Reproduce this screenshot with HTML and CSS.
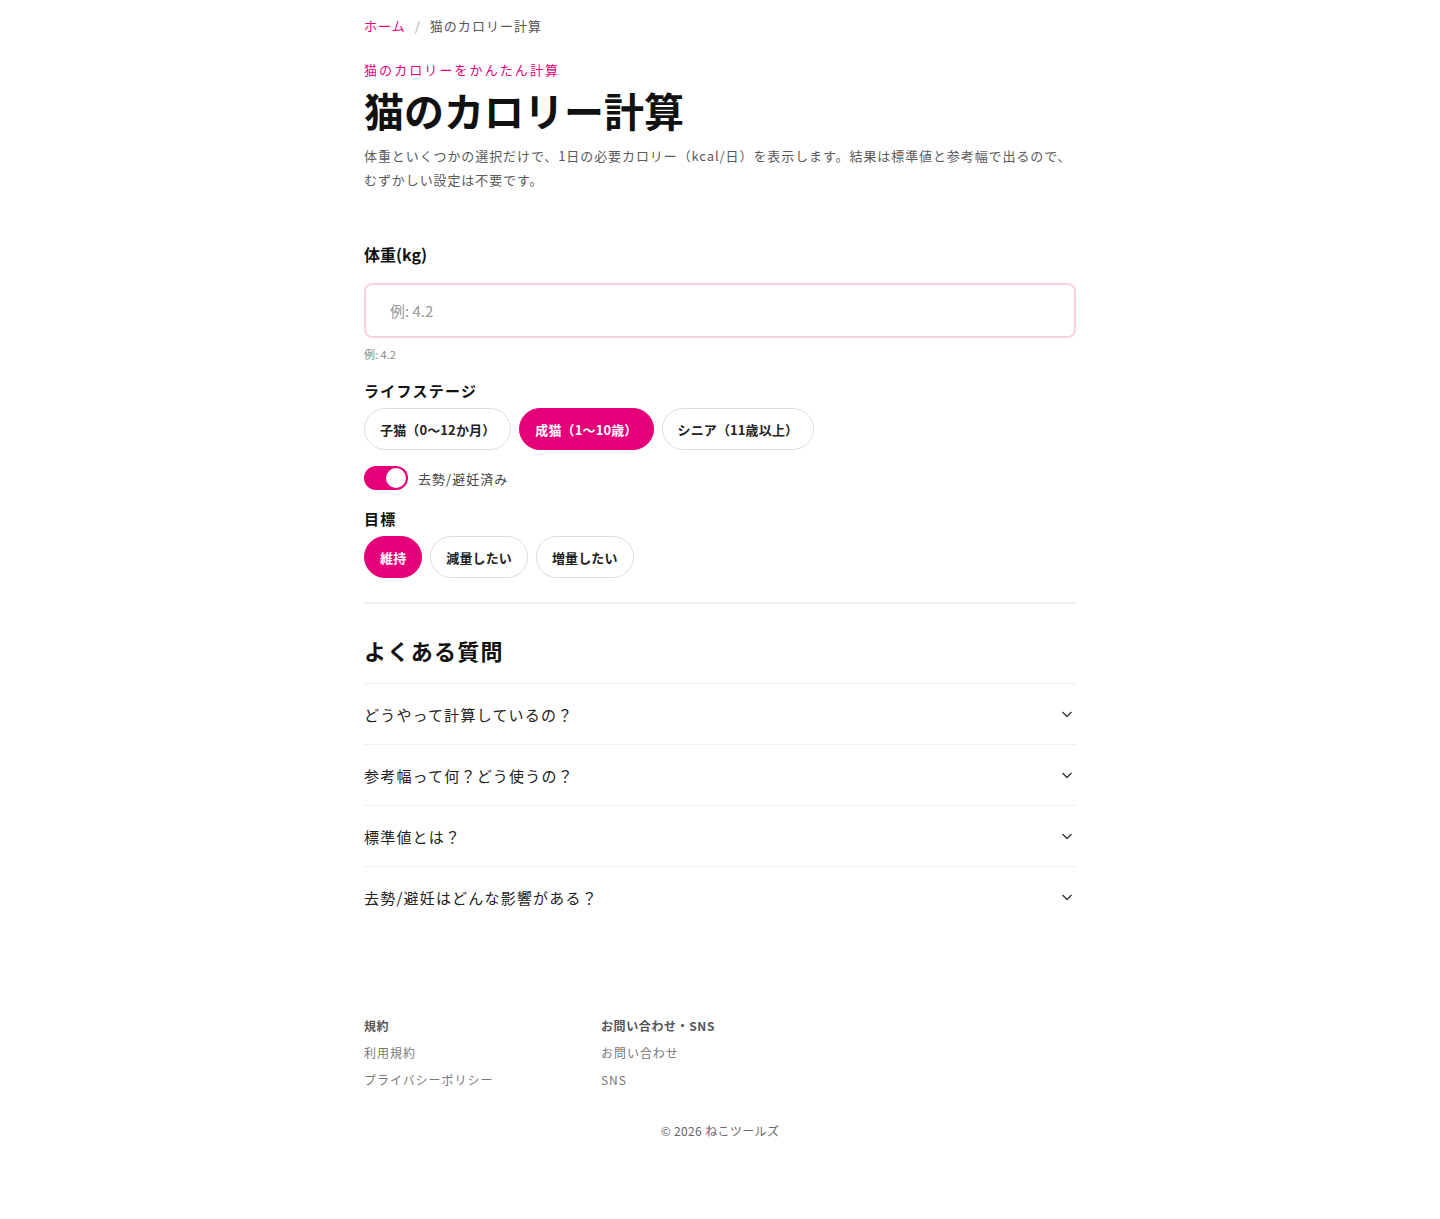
FILE: index.html
```html
<!DOCTYPE html>
<html lang="ja">
<head>
    <meta charset="UTF-8">
    <meta name="viewport" content="width=device-width, initial-scale=1.0">
    <title>猫のカロリー計算</title>
    <link rel="stylesheet" href="styles.css">
</head>
<body>

    <div class="page">
        <nav class="breadcrumb">
            <a href="#">ホーム</a>
            <span class="sep">/</span>
            <span class="current">猫のカロリー計算</span>
        </nav>

        <header class="hero">
            <p class="eyebrow">猫のカロリーをかんたん計算</p>
            <h1>猫のカロリー計算</h1>
            <p class="lead">体重といくつかの選択だけで、1日の必要カロリー（kcal/日）を表示します。結果は標準値と参考幅で出るので、むずかしい設定は不要です。</p>
        </header>

        <section class="form">
            <label class="field-label" for="weight">体重(kg)</label>
            <input id="weight" class="text-input" type="text" placeholder="例: 4.2">
            <p class="hint">例: 4.2</p>

            <h3 class="group-label">ライフステージ</h3>
            <div class="pills">
                <button class="pill">子猫（0〜12か月）</button>
                <button class="pill active">成猫（1〜10歳）</button>
                <button class="pill">シニア（11歳以上）</button>
            </div>

            <label class="switch-row">
                <span class="switch on"><span class="knob"></span></span>
                <span class="switch-text">去勢/避妊済み</span>
            </label>

            <h3 class="group-label">目標</h3>
            <div class="pills">
                <button class="pill active">維持</button>
                <button class="pill">減量したい</button>
                <button class="pill">増量したい</button>
            </div>
        </section>

        <section class="faq">
            <h2>よくある質問</h2>
            <div class="faq-item">
                <span>どうやって計算しているの？</span>
                <svg class="chevron" viewBox="0 0 12 12" width="12" height="12"><path d="M1.5 4 L6 8.5 L10.5 4" fill="none" stroke="#333" stroke-width="1.3"/></svg>
            </div>
            <div class="faq-item">
                <span>参考幅って何？どう使うの？</span>
                <svg class="chevron" viewBox="0 0 12 12" width="12" height="12"><path d="M1.5 4 L6 8.5 L10.5 4" fill="none" stroke="#333" stroke-width="1.3"/></svg>
            </div>
            <div class="faq-item">
                <span>標準値とは？</span>
                <svg class="chevron" viewBox="0 0 12 12" width="12" height="12"><path d="M1.5 4 L6 8.5 L10.5 4" fill="none" stroke="#333" stroke-width="1.3"/></svg>
            </div>
            <div class="faq-item">
                <span>去勢/避妊はどんな影響がある？</span>
                <svg class="chevron" viewBox="0 0 12 12" width="12" height="12"><path d="M1.5 4 L6 8.5 L10.5 4" fill="none" stroke="#333" stroke-width="1.3"/></svg>
            </div>
        </section>

        <footer class="footer">
            <div class="footer-cols">
                <div class="footer-col">
                    <h4>規約</h4>
                    <a href="#">利用規約</a>
                    <a href="#">プライバシーポリシー</a>
                </div>
                <div class="footer-col">
                    <h4>お問い合わせ・SNS</h4>
                    <a href="#">お問い合わせ</a>
                    <a href="#">SNS</a>
                </div>
            </div>
            <p class="copy">© 2026 ねこツールズ</p>
        </footer>
    </div>

</body>
</html>
```

FILE: styles.css
```css
body {
    margin: 0;
    background: #fff;
    color: #111;
    font-family: "Noto Sans CJK JP", "Noto Sans", sans-serif;
}
.page {
    max-width: 712px;
    margin: 0 auto;
    padding-top: 16px;
}
.breadcrumb {
    font-size: 13px;
    line-height: 20px;
    letter-spacing: 0.08em;
    color: #555;
}
.breadcrumb a {
    color: #e5007a;
    text-decoration: none;
}
.breadcrumb .sep {
    color: #aaa;
    margin: 0 5px;
}
.hero {
    margin-top: 24px;
}
.eyebrow {
    margin: 0;
    font-size: 13px;
    line-height: 20px;
    letter-spacing: 0.16em;
    color: #e5007a;
}
.hero h1 {
    margin: 6px 0 0;
    font-size: 40px;
    line-height: 48px;
    font-weight: 700;
    color: #111;
}
.lead {
    margin: 10px 0 0;
    font-size: 13px;
    line-height: 24px;
    letter-spacing: 0.07em;
    color: #5a5a5a;
}
.form {
    margin-top: 50px;
    padding-bottom: 24px;
    border-bottom: 2px solid #f1f1f3;
}
.field-label {
    display: block;
    font-size: 16px;
    line-height: 24px;
    font-weight: 700;
}
.text-input {
    display: block;
    box-sizing: border-box;
    width: 100%;
    height: 55px;
    margin-top: 17px;
    padding: 0 24px;
    border: 2px solid #fbcfe6;
    border-radius: 8px;
    font-family: inherit;
    font-size: 15px;
    color: #111;
    outline: none;
}
.text-input::placeholder {
    color: #999;
}
.hint {
    margin: 8px 0 0;
    font-size: 11px;
    line-height: 16px;
    color: #888;
}
.group-label {
    margin: 18px 0 0;
    font-size: 15px;
    line-height: 22px;
    font-weight: 700;
    letter-spacing: 0.08em;
}
.pills {
    display: flex;
    gap: 8px;
    margin-top: 6px;
}
.pill {
    height: 42px;
    padding: 0 15px;
    border: 1px solid #dcdce2;
    border-radius: 999px;
    background: #fff;
    font-family: inherit;
    font-size: 13px;
    font-weight: 700;
    letter-spacing: 0.01em;
    color: #222;
    cursor: pointer;
}
.pill.active {
    background: #e5007a;
    border-color: #e5007a;
    color: #fff;
}
.switch-row {
    display: flex;
    align-items: center;
    gap: 10px;
    margin-top: 16px;
}
.switch {
    display: flex;
    align-items: center;
    box-sizing: border-box;
    width: 44px;
    height: 24px;
    padding: 2px;
    border-radius: 12px;
    background: #ccc;
}
.switch.on {
    background: #e5007a;
    justify-content: flex-end;
}
.knob {
    width: 20px;
    height: 20px;
    border-radius: 50%;
    background: #fff;
}
.switch-text {
    font-size: 13px;
    color: #444;
    letter-spacing: 0.08em;
}
.faq h2 {
    margin: 30px 0 0;
    font-size: 22px;
    line-height: 32px;
    font-weight: 700;
    letter-spacing: 0.06em;
    padding-bottom: 17px;
}
.faq-item {
    display: flex;
    align-items: center;
    justify-content: space-between;
    height: 60px;
    border-top: 1px solid #f0f0f2;
    font-size: 15px;
    letter-spacing: 0.08em;
    color: #222;
}
.chevron {
    margin-right: 3px;
}
.footer {
    margin-top: 89px;
    padding-bottom: 70px;
}
.footer-cols {
    display: flex;
}
.footer-col {
    display: flex;
    flex-direction: column;
    width: 237px;
}
.footer-col h4 {
    margin: 0 0 3px;
    font-size: 12px;
    line-height: 20px;
    letter-spacing: 0.05em;
    color: #555;
}
.footer-col a {
    font-size: 12px;
    line-height: 27px;
    letter-spacing: 0.08em;
    color: #777;
    text-decoration: none;
}
.copy {
    margin: 29px 0 0;
    text-align: center;
    font-size: 12px;
    color: #666;
    letter-spacing: 0.03em;
}
```
